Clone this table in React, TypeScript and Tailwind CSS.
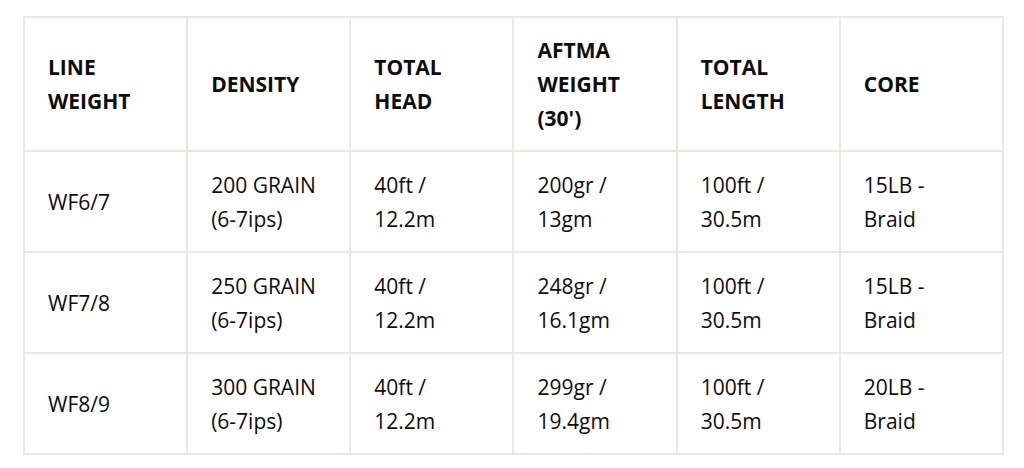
const headers = [
  ["LINE", "WEIGHT"],
  ["DENSITY"],
  ["TOTAL", "HEAD"],
  ["AFTMA", "WEIGHT", "(30')"],
  ["TOTAL", "LENGTH"],
  ["CORE"],
];

const rows = [
  [["WF6/7"], ["200 GRAIN", "(6-7ips)"], ["40ft /", "12.2m"], ["200gr /", "13gm"], ["100ft /", "30.5m"], ["15LB -", "Braid"]],
  [["WF7/8"], ["250 GRAIN", "(6-7ips)"], ["40ft /", "12.2m"], ["248gr /", "16.1gm"], ["100ft /", "30.5m"], ["15LB -", "Braid"]],
  [["WF8/9"], ["300 GRAIN", "(6-7ips)"], ["40ft /", "12.2m"], ["299gr /", "19.4gm"], ["100ft /", "30.5m"], ["20LB -", "Braid"]],
];

export default function App() {
  return (
    <div className="w-[1024px] h-[468px] bg-white pt-[16px] pl-[23px] font-['Open_Sans',sans-serif] text-[#0d0d0d]">
      <table className="w-[981px] border-collapse table-fixed text-[21px] leading-[34px]">
        <thead>
          <tr>
            {headers.map((h, i) => (
              <th key={i} className="border-2 border-[#e9e8e2] px-[23px] py-[15px] text-left align-middle font-bold">
                {h.map((l, j) => (
                  <div key={j}>{l}</div>
                ))}
              </th>
            ))}
          </tr>
        </thead>
        <tbody>
          {rows.map((r, i) => (
            <tr key={i}>
              {r.map((c, j) => (
                <td key={j} className="border-2 border-[#e9e8e2] px-[23px] py-[15.5px] text-left align-middle font-medium">
                  {c.map((l, k) => (
                    <div key={k}>{l}</div>
                  ))}
                </td>
              ))}
            </tr>
          ))}
        </tbody>
      </table>
    </div>
  );
}
